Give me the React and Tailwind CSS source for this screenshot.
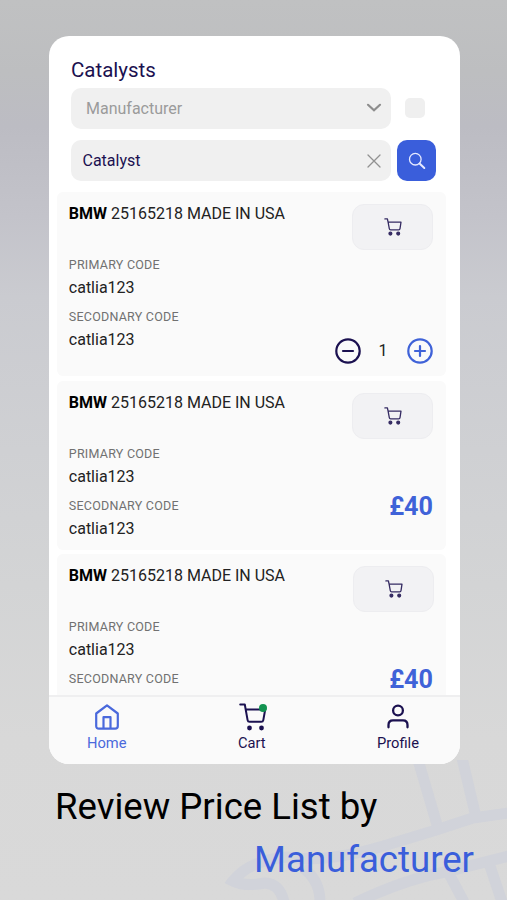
import React from "react";

const items = [
  { id: 1, brand: "BMW", name: "25165218 MADE IN USA", primary: "catlia123", secondary: "catlia123", qty: 1 },
  { id: 2, brand: "BMW", name: "25165218 MADE IN USA", primary: "catlia123", secondary: "catlia123", price: "£40" },
  { id: 3, brand: "BMW", name: "25165218 MADE IN USA", primary: "catlia123", secondary: "catlia123", price: "£40" },
];

// Small trolley used on the add to cart buttons
function CartIcon({ className }) {
  return (
    <svg viewBox="0 0 18 18" className={className} fill="none" stroke="currentColor" strokeWidth="1.3" strokeLinecap="round" strokeLinejoin="round">
      <path d="M.9.9h2.5l.7 3.3M4.1 4.2h12.9l-1 6.5c-.1.8-.6 1.2-1.3 1.2H6.6c-.8 0-1.2-.4-1.3-1.2z" />
      <circle cx="6.4" cy="15.6" r="1.4" fill="currentColor" />
      <circle cx="14.2" cy="15.6" r="1.4" fill="currentColor" />
    </svg>
  );
}

function SearchIcon() {
  return (
    <svg viewBox="0 0 18 18" className="size-[18px]" fill="none" stroke="#e6eaff" strokeLinecap="round">
      <circle cx="7.3" cy="7.2" r="5.8" strokeWidth="1.3" />
      <path d="M11.8 11.8l4.5 4.2" strokeWidth="2" />
    </svg>
  );
}

function Code({ label, value }) {
  return (
    <div className="h-[52.4px]">
      <p className="text-[12.5px] leading-[16px] tracking-[0.24px] text-[#717171]">{label}</p>
      <p className="mt-[4px] text-[16px] leading-[22px] text-[#222]">{value}</p>
    </div>
  );
}

// Minus / value / plus control
function Stepper({ qty }) {
  return (
    <div className="flex items-center">
      <svg viewBox="0 0 26 26" className="size-[26px] text-[#1b1150]" fill="none" stroke="currentColor" strokeWidth="2.2" strokeLinecap="round">
        <circle cx="13" cy="13" r="11.7" />
        <path d="M8 13h10" />
      </svg>
      <span className="w-[46px] pr-[2px] text-center text-[16px] leading-[26px] text-[#222]">{qty}</span>
      <svg viewBox="0 0 26 26" className="size-[26px] text-[#3f62d8]" fill="none" stroke="currentColor" strokeWidth="2.2" strokeLinecap="round">
        <circle cx="13" cy="13" r="11.7" />
        <path d="M8 13h10M13 8v10" />
      </svg>
    </div>
  );
}

function CatalystCard({ item }) {
  return (
    <div className={`flex shrink-0 justify-between rounded-[6px] bg-[#fafafa] pl-[12.3px] pt-3 ${item.qty ? "h-[184px]" : "h-[169px]"} ${item.id === 3 ? "pr-[12px]" : "pr-[13px]"}`}>
      <div>
        <h2 className="text-[16px] leading-[20px] text-[#222]">
          <b className="font-bold text-black">{item.brand}</b> {item.name}
        </h2>
        <div className="mt-[33px]">
          <Code label="PRIMARY CODE" value={item.primary} />
          <Code label="SECODNARY CODE" value={item.secondary} />
        </div>
      </div>
      <div className="flex flex-col items-end">
        <button className="flex h-[46px] w-[81px] items-center justify-center rounded-[12px] border border-[#ededf0] bg-[#f2f2f4] text-[#352b62]">
          <CartIcon className="size-[18px]" />
        </button>
        {item.qty ? (
          <div className="mt-[88px]">
            <Stepper qty={item.qty} />
          </div>
        ) : (
          <p className={`mt-[53px] text-[25.2px] font-bold leading-[30px] text-[#3f62d8] ${item.id === 3 ? "pr-px" : ""}`}>{item.price}</p>
        )}
      </div>
    </div>
  );
}

function NavItem({ label, className, children }) {
  return (
    <div className={`flex flex-col items-center ${className}`}>
      <div className="h-[30px]">{children}</div>
      <span className="text-[14.7px] leading-[20px]">{label}</span>
    </div>
  );
}

function BottomNav() {
  return (
    <nav className="relative flex h-[69px] shrink-0 justify-between border-t-2 border-[#efeff0] bg-[#fafafa] pl-[38.5px] pr-[40.5px] pt-[6px]">
      <NavItem label="Home" className="text-[#4a69dc]">
        <svg viewBox="0 0 26 28" className="h-[28px] w-[26px]" fill="none" stroke="currentColor" strokeWidth="2.2" strokeLinejoin="round">
          <path d="M2.2 10.5L13 2.3l10.8 8.2V23c0 1.7-.9 2.7-2.7 2.7H4.9c-1.8 0-2.7-1-2.7-2.7z" />
          <path d="M9.5 25.5V14.2h7v11.3" />
        </svg>
      </NavItem>
      <NavItem label="Cart" className="text-[#1b1150]">
        <div className="relative left-px">
          <svg viewBox="0 0 28 28" className="size-[28px]" fill="none" stroke="currentColor" strokeWidth="2" strokeLinecap="round" strokeLinejoin="round">
            <path d="M1.2 1.5h4.6l2.8 15.6c.2 1.1.9 1.7 2 1.7h11.6c1.2 0 1.9-.6 2.1-1.7L26.2 6.500H7" />
            <circle cx="10.5" cy="25" r="1.4" fill="currentColor" />
            <circle cx="22.5" cy="25" r="1.4" fill="currentColor" />
          </svg>
          <span className="absolute right-0 top-[1px] size-2 rounded-full bg-[#139350]" />
        </div>
      </NavItem>
      <NavItem label="Profile" className="text-[#1b1150]">
        <svg viewBox="0 0 24 28" className="h-[28px] w-[24px]" fill="none" stroke="currentColor" strokeWidth="2.3" strokeLinecap="round">
          <circle cx="12" cy="7.5" r="4.9" />
          <path d="M2.5 24.3v-2.3c0-3 1.8-4.7 4.5-4.7h10c2.7 0 4.5 1.7 4.5 4.7v2.3" />
        </svg>
      </NavItem>
    </nav>
  );
}

// Faint converter outline in the corner of the backdrop
function Watermark() {
  return (
    <svg viewBox="0 0 282 140" className="absolute bottom-0 right-0 h-[140px] w-[282px]" fill="none" stroke="#d1d3da" strokeWidth="11">
      <path d="M193 0L213 68M237 -2L251 57" />
      <path d="M284 53L248 58L208 71L155 87Q100 103 62 97Q25 100 8 121Q20 127 40 123Q55 124 59 142" />
      <path d="M78 108Q95 120 95 142M130 143Q180 119 220 112L284 96M223 112L239 142M264 103L277 142" />
    </svg>
  );
}

export default function App() {
  return (
    <main className="relative flex h-[900px] w-[507px] flex-col overflow-hidden bg-[linear-gradient(180deg,#c0c1c2_0%,#bdbec0_8%,#bcbcc3_14%,#c3c3ca_24%,#cacbd0_33%,#cfd0d3_50%,#d3d4d5_65%,#d8d8d8_82%,#d9d9d9_100%)] pt-[35.5px] font-[Roboto,sans-serif]">
      <Watermark />

      {/* Phone screen */}
      <section className="relative ml-[48.5px] flex h-[728px] w-[411px] flex-col overflow-hidden rounded-[20px] bg-white">
        <header className="pl-[22.5px] pt-[22.5px]">
          <h1 className="text-[20.5px] leading-[24px] text-[#1b1150]">Catalysts</h1>
          <div className="mt-[6px] flex items-center">
            <div className="flex h-[40.5px] w-[320px] items-center justify-between rounded-[10px] bg-[#f0f0f0] pl-[15px] pr-[9px] text-[16px] text-[#9b9b9b]">
              <span className="pt-px">Manufacturer</span>
              <svg viewBox="0 0 16 10" className="h-[10px] w-[16px]" fill="none" stroke="#8e8e8e" strokeWidth="2.2" strokeLinecap="round">
                <path d="M2 1.8L8 7.3l6-5.5" />
              </svg>
            </div>
            <span className="ml-[14px] size-[20px] rounded-[5px] bg-[#efefef]" />
          </div>
          <div className="mt-[11.5px] flex items-center">
            <div className="flex h-[40.5px] w-[320px] items-center justify-between rounded-[10px] bg-[#f0f0f0] pl-[11.5px] pr-[10px] text-[16px] text-[#1b1150]">
              Catalyst
              <svg viewBox="0 0 14 14" className="size-[14px]" fill="none" stroke="#919191" strokeWidth="1.3" strokeLinecap="round">
                <path d="M1 1l12 12M13 1L1 13" />
              </svg>
            </div>
            <button className="ml-[6px] flex h-[41px] w-[39px] items-center justify-center rounded-[10px] bg-[#3a5edb]">
              <SearchIcon />
            </button>
          </div>
        </header>

        <div className="mt-[11px] flex min-h-0 flex-1 flex-col gap-[4.5px] overflow-hidden pl-2 pr-[13.5px]">
          {items.map((item) => (
            <CatalystCard key={item.id} item={item} />
          ))}
        </div>

        <BottomNav />
      </section>

      {/* Caption */}
      <footer className="relative pl-[55px] pr-[33px] text-[36.6px]">
        <p className="mt-[22px] leading-[42px] text-black">Review Price List by</p>
        <p className="mt-[11px] text-right leading-[42px] text-[#3a5edb]">Manufacturer</p>
      </footer>
    </main>
  );
}
